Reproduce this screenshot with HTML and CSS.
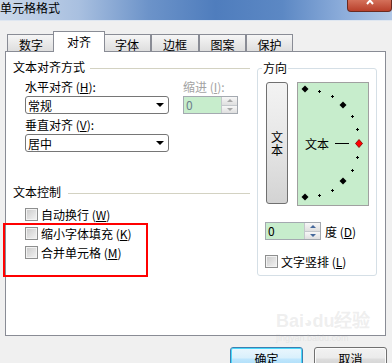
FILE: index.html
```html
<!DOCTYPE html>
<html lang="zh-CN">
<head>
  <meta charset="UTF-8">
  <title>单元格格式</title>
  <link rel="stylesheet" href="styles.css">
</head>
<body>
  <div class="window">
    <div class="titlebar">
      <span class="title">单元格格式</span>
      <span class="close">
        <svg width="45" height="11" viewBox="0 0 45 11"><path d="M19 -3 L25 4 M25 -3 L19 4" stroke="#fff" stroke-width="2"/></svg>
      </span>
    </div>

    <div class="tabs">
      <div class="tab">数字</div>
      <div class="tab active">对齐</div>
      <div class="tab">字体</div>
      <div class="tab">边框</div>
      <div class="tab narrow">图案</div>
      <div class="tab narrow">保护</div>
    </div>

    <div class="panel">
      <div class="left">
        <div class="legend"><span>文本对齐方式</span></div>
        <div class="align-grid">
          <div class="col-main">
            <div class="label">水平对齐 (<u>H</u>):</div>
            <div class="select"><span>常规</span><i class="arrow"></i></div>
            <div class="label">垂直对齐 (<u>V</u>):</div>
            <div class="select"><span>居中</span><i class="arrow"></i></div>
          </div>
          <div class="col-indent">
            <div class="label disabled">缩进 (<u>I</u>):</div>
            <div class="spin disabled">
              <span class="spin-value">0</span>
              <span class="spin-btns"><i class="up"></i><i class="down"></i></span>
            </div>
          </div>
        </div>

        <div class="legend second"><span>文本控制</span></div>
        <div class="checks">
          <div class="check"><span class="box"></span>自动换行 (<u>W</u>)</div>
          <div class="check"><span class="box"></span>缩小字体填充 (<u>K</u>)</div>
          <div class="check"><span class="box"></span>合并单元格 (<u>M</u>)</div>
        </div>
      </div>

      <fieldset class="orient">
        <legend>方向</legend>
        <div class="orient-row">
          <div class="vbtn">文<br>本</div>
          <div class="dial">
            <svg width="70" height="122" viewBox="0 0 70 122">
              <g fill="#000">
                <polygon points="7,2.5 10.5,6 7,9.5 3.5,6"/>
                <polygon points="45,18.5 48.5,22 45,25.5 41.5,22"/>
                <polygon points="45,94.5 48.5,98 45,101.5 41.5,98"/>
                <polygon points="7,110.5 10.5,114 7,117.5 3.5,114"/>
              </g>
              <path stroke="#000" stroke-width="1" fill="none"
                d="M20 8.5h3M21.5 7v3
                   M33 13.5h3M34.5 12v3
                   M53 33.5h3M54.5 32v3
                   M58 46.5h3M59.5 45v3
                   M58 74.5h3M59.5 73v3
                   M53 87.5h3M54.5 86v3
                   M33 107.5h3M34.5 106v3
                   M20 112.5h3M21.5 111v3"/>
              <text x="7" y="60" dominant-baseline="central" class="dial-text">文本</text>
              <rect x="37" y="60" width="14" height="1" fill="#000"/>
              <polygon points="61,56.5 64.5,60.5 61,64.5 57.5,60.5" fill="#f00" stroke="#700" stroke-width="0.8"/>
            </svg>
          </div>
        </div>
        <div class="degree">
          <div class="spin">
            <span class="spin-value">0</span>
            <span class="spin-btns"><i class="up"></i><i class="down"></i></span>
          </div>
          <span class="degree-label">度 (<u>D</u>)</span>
        </div>
        <div class="check vertical"><span class="box"></span>文字竖排 (<u>L</u>)</div>
      </fieldset>
    </div>

    <div class="actions">
      <button class="btn default">确定</button>
      <button class="btn">取消</button>
    </div>

    <!-- annotation frame drawn over the dialog -->
    <div class="mark"></div>
    <div class="watermark">Bai<span class="paw">◕</span>du经验<small>jingyan.baidu.com</small></div>
  </div>
</body>
</html>
```

FILE: styles.css
```css
* {
  box-sizing: border-box;
}
body {
  margin: 0;
  width: 392px;
  height: 363px;
  overflow: hidden;
  background: #f0f0f0;
  font-family: "Noto Sans CJK SC", "Liberation Sans", sans-serif;
  font-size: 12px;
  color: #000;
}
u {
  text-decoration: underline;
}
.window {
  position: relative;
  height: 363px;
}

/* title bar */
.titlebar {
  height: 21px;
  display: flex;
  justify-content: space-between;
  align-items: flex-start;
  background: linear-gradient(to right, #cbd8ea 0%, #a9c0e0 20%, #6c93c9 38%, #4f7dbd 55%, #5c88c4 72%, #8eaedb 88%, #b2c8e6 100%);
  border-bottom: 1px solid #dfe7f1;
}
.title {
  line-height: 16px;
}
.close {
  width: 45px;
  height: 12px;
  background: linear-gradient(#d4705a, #b8402b);
  border: 1px solid #6b2a20;
  border-top: none;
  border-radius: 0 0 4px 4px;
  overflow: hidden;
}
.close svg {
  display: block;
}

/* tabs */
.tabs {
  display: flex;
  align-items: flex-end;
  height: 30px;
  padding-left: 7px;
}
.tab {
  width: 48px;
  height: 17px;
  border: 1px solid #898c95;
  border-bottom: none;
  background: linear-gradient(#f6f6f6, #dedede);
  text-align: center;
  line-height: 17px;
  padding-top: 1px;
}
.tab.narrow {
  width: 47px;
}
.tab.active {
  position: relative;
  z-index: 2;
  height: 21px;
  margin: 0 -2px -1px;
  width: 52px;
  background: #fff;
  line-height: 19px;
  padding-top: 0;
}

/* main panel */
.panel {
  margin-left: 5px;
  width: 381px;
  height: 285px;
  background: #fff;
  border: 1px solid #898c95;
  display: flex;
  padding: 8px 8px 0 7px;
}
.left {
  width: 237px;
}
.legend {
  display: flex;
  align-items: center;
  height: 14px;
  line-height: 14px;
}
.legend::after {
  content: "";
  flex: 1;
  border-top: 1px solid #d3d2c2;
  margin-left: 5px;
  margin-top: 2px;
}
.legend.second {
  margin-top: 29px;
}
.legend.second::after {
  margin-left: 7px;
}
.align-grid {
  display: flex;
  gap: 14px;
  padding-left: 12px;
  margin-top: 6px;
}
.col-main {
  width: 144px;
}
.col-indent {
  width: 55px;
}
.label {
  height: 14px;
  line-height: 14px;
  white-space: nowrap;
}
.label.disabled {
  color: #a3a3a3;
}
.select {
  display: flex;
  align-items: center;
  justify-content: space-between;
  height: 18px;
  margin: 2px 0 4px;
  padding-left: 2px;
  border: 1px solid #767676;
  border-radius: 3px;
  background: #fff;
}
.arrow {
  width: 0;
  height: 0;
  border-left: 4px solid transparent;
  border-right: 4px solid transparent;
  border-top: 4px solid #000;
  margin-right: 4px;
}

/* spin box */
.spin {
  display: flex;
  width: 55px;
  height: 18px;
  margin-top: 2px;
  border: 1px solid #a4a9b0;
}
.spin-value {
  flex: 1;
  background: #c7edcc;
  padding-left: 2px;
  line-height: 16px;
}
.spin.disabled .spin-value {
  color: #6d7f8c;
}
.spin-btns {
  width: 16px;
  display: flex;
  flex-direction: column;
  border-left: 1px solid #c4c8cc;
}
.spin-btns i {
  flex: 1;
  display: flex;
  align-items: center;
  justify-content: center;
  background: linear-gradient(#f7f7f7, #dfdfdf);
}
.spin-btns i + i {
  border-top: 1px solid #c4c8cc;
}
.spin-btns i::before {
  content: "";
  border-left: 3px solid transparent;
  border-right: 3px solid transparent;
}
.spin-btns .up::before {
  border-bottom: 3px solid #46699b;
}
.spin-btns .down::before {
  border-top: 3px solid #46699b;
}
.spin.disabled .up::before {
  border-bottom-color: #a8a8a8;
}
.spin.disabled .down::before {
  border-top-color: #a8a8a8;
}

/* checkboxes */
.checks {
  margin-top: 6px;
  padding-left: 12px;
}
.check {
  display: flex;
  align-items: center;
  height: 19px;
  white-space: nowrap;
}
.box {
  width: 13px;
  height: 13px;
  margin-right: 3px;
  border: 1px solid #8e8f8f;
  background: linear-gradient(135deg, #c9c9c9, #f4f4f4);
  box-shadow: inset 0 0 0 1px #f2f2f2;
}

/* orientation group */
.orient {
  margin: 1px 0 0 7px;
  width: 120px;
  min-width: 0;
  height: 215px;
  border: 1px solid #d5dfe6;
  border-radius: 3px;
  padding: 7px 6px 0 8px;
}
.orient legend {
  padding: 0 1px;
  margin-left: -4px;
  line-height: 14px;
}
.orient-row {
  display: flex;
  gap: 9px;
  height: 124px;
}
.vbtn {
  width: 22px;
  height: 122px;
  border: 1px solid #707070;
  border-radius: 3px;
  background: linear-gradient(#f3f3f3, #e6e6e6 50%, #d3d3d3);
  display: flex;
  align-items: center;
  justify-content: center;
  text-align: center;
  line-height: 13px;
}
.dial {
  width: 72px;
  height: 124px;
  border: 1px solid #a0a0a0;
  background: #c7edcc;
}
.dial svg {
  display: block;
}
.dial-text {
  font-family: "Noto Sans CJK SC", sans-serif;
  font-size: 12px;
}
.degree {
  display: flex;
  align-items: center;
  margin: 16px 0 0 -1px;
}
.degree .spin {
  width: 56px;
  margin-top: 0;
}
.degree-label {
  margin-left: 4px;
}
.check.vertical {
  margin: 12px 0 0 -1px;
}

/* buttons */
.actions {
  display: flex;
  justify-content: flex-end;
  gap: 11px;
  margin-top: 11px;
  padding-right: 5px;
}
.btn {
  width: 73px;
  height: 23px;
  padding: 0;
  font: inherit;
  line-height: 20px;
  color: #000;
  border: 1px solid #707070;
  border-radius: 3px;
  background: linear-gradient(#f2f2f2, #ebebeb 48%, #dddddd 52%, #cfcfcf);
  box-shadow: inset 0 0 0 1px #fbfbfb;
}
.btn.default {
  border-color: #3c7fb1;
  background: linear-gradient(#eaf6fd, #d9f0fc 48%, #bee6fd 52%, #a7d9f5);
  box-shadow: inset 0 0 0 1px #48d8fb;
}

/* red annotation */
.mark {
  position: absolute;
  left: 3px;
  top: 223px;
  width: 145px;
  height: 54px;
  border: 2px solid #f00;
}
.watermark {
  position: absolute;
  left: 276px;
  top: 310px;
  font-family: "Liberation Sans", sans-serif;
  font-size: 18px;
  font-weight: bold;
  line-height: 22px;
  color: rgba(200, 200, 200, 0.3);
  white-space: nowrap;
}
.watermark .paw {
  font-size: 14px;
}
.watermark small {
  display: block;
  font-size: 9px;
  line-height: 11px;
  font-weight: normal;
}
```
